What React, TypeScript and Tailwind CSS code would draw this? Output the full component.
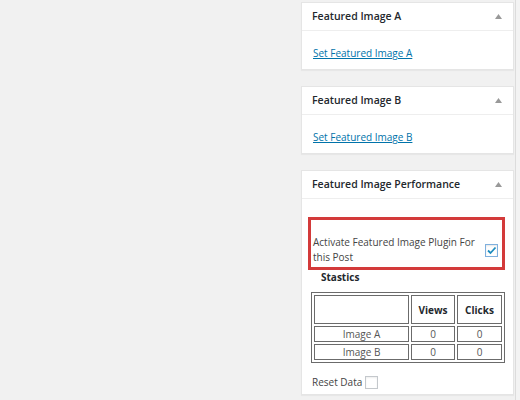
import React from 'react';

function Toggle() {
  return (
    <svg width="7" height="5" viewBox="0 0 7 5" className="mr-[11px]">
      <path d="M3.5 0 L7 5 L0 5 Z" fill="#999" />
    </svg>
  );
}

function Panel({ title, children }: { title: string; children: React.ReactNode }) {
  return (
    <div className="bg-white border border-[#e5e5e5] shadow-[0_1px_1px_rgba(0,0,0,0.04)]">
      <div className="h-[28px] pl-[10px] flex items-center justify-between border-b border-[#eee]">
        <h3 className="text-[10.5px] leading-[15px] font-semibold text-[#23282d]">{title}</h3>
        <Toggle />
      </div>
      {children}
    </div>
  );
}

function LinkBody({ label }: { label: string }) {
  return (
    <div className="pl-[11px] pt-[12px] pb-[6px] text-[10px] leading-[20px]">
      <a href="#" className="text-[#0073aa] underline">{label}</a>
    </div>
  );
}

export default function App() {
  const rows = [
    { name: 'Image A', views: 0, clicks: 0 },
    { name: 'Image B', views: 0, clicks: 0 },
  ];

  return (
    <div className="w-[520px] h-[400px] overflow-hidden bg-[#f1f1f1] flex font-['Open_Sans',sans-serif]">
      <div className="w-[301px] shrink-0" />
      <div className="w-[213px] shrink-0 pt-[2px] flex flex-col gap-[16px]">
        <Panel title="Featured Image A">
          <LinkBody label="Set Featured Image A" />
        </Panel>
        <Panel title="Featured Image B">
          <LinkBody label="Set Featured Image B" />
        </Panel>
        <Panel title="Featured Image Performance">
          <div className="pt-[18px] pb-[4px]">
            <div className="ml-[6px] mr-[8px] border-[3px] border-[#d33a3a] pt-[15px] pb-[2px] pl-[2px] pr-[2px] flex items-center justify-between">
              <label className="w-[172px] text-[10px] leading-[15px] text-[#444]">
                Activate Featured Image Plugin For this Post
              </label>
              <span className="w-[13px] h-[13px] border border-[#7fb0de] bg-white flex items-center justify-center mr-[2px] shadow-[inset_0_1px_2px_rgba(0,0,0,0.1)]">
                <svg width="11" height="11" viewBox="0 0 11 11">
                  <path d="M2 5.5 L4.5 8 L9.5 2.5" fill="none" stroke="#1e8cbe" strokeWidth="1.8" />
                </svg>
              </span>
            </div>
            <div className="pl-[19px] text-[10px] leading-[15px] font-bold text-[#23282d]">Stastics</div>
            <table className="ml-[9px] mt-[7px] w-[194px] border border-[#6b6b6b] border-separate border-spacing-[2px] text-[10px] leading-[14px] text-[#555]">
              <thead>
                <tr>
                  <th className="w-[95px] h-[29px] border border-[#6b6b6b]"></th>
                  <th className="w-[44px] border border-[#6b6b6b] font-bold text-[#23282d]">Views</th>
                  <th className="w-[45px] border border-[#6b6b6b] font-bold text-[#23282d]">Clicks</th>
                </tr>
              </thead>
              <tbody>
                {rows.map(r => (
                  <tr key={r.name}>
                    <td className="h-[16px] border border-[#6b6b6b] text-center">{r.name}</td>
                    <td className="border border-[#6b6b6b] text-center">{r.views}</td>
                    <td className="border border-[#6b6b6b] text-center">{r.clicks}</td>
                  </tr>
                ))}
              </tbody>
            </table>
            <div className="mt-[12px] pl-[10px] flex items-center gap-[3px] text-[10px] leading-[15px] text-[#444]">
              <span>Reset Data</span>
              <span className="w-[13px] h-[13px] border border-[#c4c8cc] bg-white shadow-[inset_0_1px_2px_rgba(0,0,0,0.07)]" />
            </div>
          </div>
        </Panel>
      </div>
      <div className="ml-[1px] flex-1 border-l border-[#dcdcdc] bg-[#f3f3f3]" />
    </div>
  );
}
